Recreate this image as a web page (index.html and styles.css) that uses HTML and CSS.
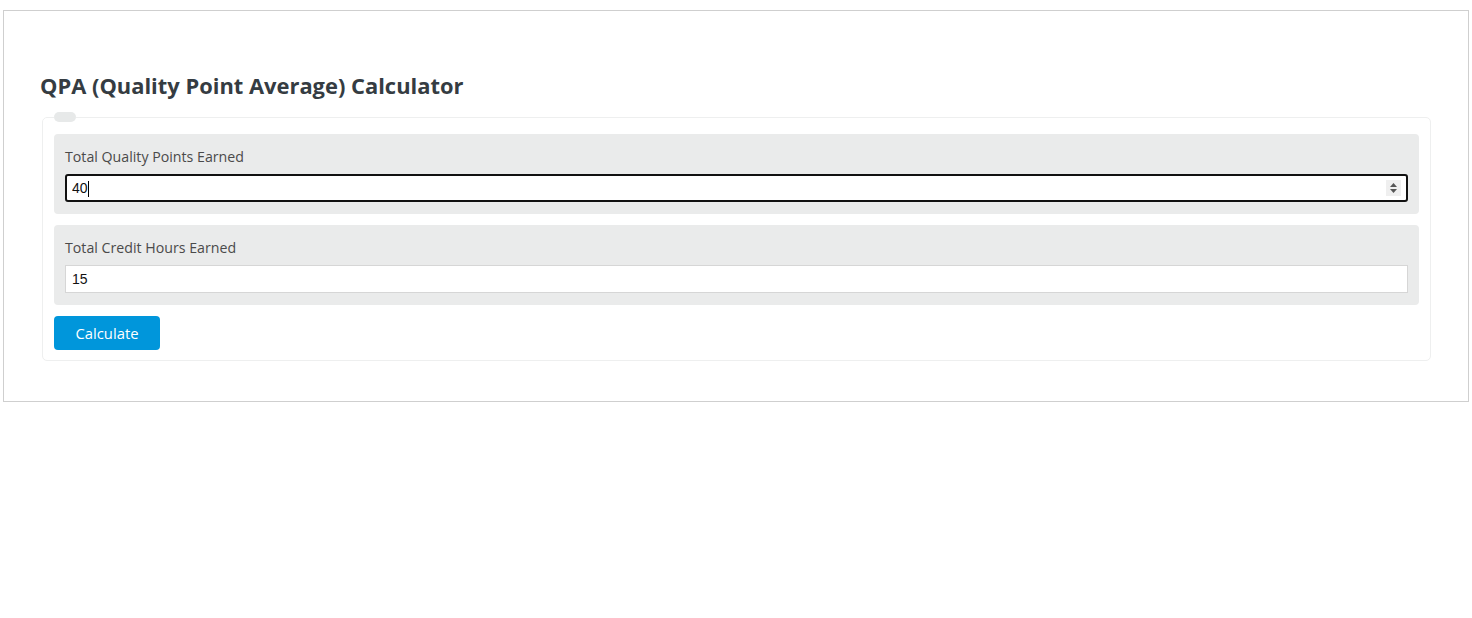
FILE: index.html
```html
<!DOCTYPE html>
<html>
<head>
    <title>QPA Calculator</title>
    <link rel="stylesheet" href="styles.css">
</head>
<body>
    <div class="calc-wrap">
        <h2 class="calc-title">QPA (Quality Point Average) Calculator</h2>
        <form class="calc-form" onsubmit="return false;">
            <fieldset class="calc-fields">
                <legend class="calc-legend"></legend>

                <div class="field">
                    <label class="field-label" for="points">Total Quality Points Earned</label>
                    <div class="number-box focused">
                        <input class="field-input" id="points" type="text" value="40">
                        <span class="caret"></span>
                        <span class="spinner">
                            <svg width="9" height="12" viewBox="0 0 9 12">
                                <path d="M4.5 1 L8 5 L1 5 Z" fill="#555"/>
                                <path d="M4.5 11 L8 7 L1 7 Z" fill="#555"/>
                            </svg>
                        </span>
                    </div>
                </div>

                <div class="field">
                    <label class="field-label" for="hours">Total Credit Hours Earned</label>
                    <div class="number-box">
                        <input class="field-input" id="hours" type="text" value="15">
                    </div>
                </div>

                <button class="calc-btn" type="button">Calculate</button>
            </fieldset>
        </form>
    </div>
</body>
</html>
```

FILE: styles.css
```css
body {
    margin: 0;
    background: #fff;
    font-family: "Open Sans", "Noto Sans", sans-serif;
}

.calc-wrap {
    margin: 10px 3px 0 3px;
    border: 1px solid #cfcfcf;
    padding: 0 37px 40px 38px;
    box-sizing: border-box;
    width: 1466px;
}

.calc-title {
    margin: 0 0 0 -2px;
    padding: 61px 0 12px 0;
    font-size: 21.9px;
    line-height: 28px;
    font-weight: 700;
    color: #353c42;
}

.calc-form {
    margin: 0;
}

.calc-fields {
    margin: 0;
    border: 1px solid #eeefef;
    border-radius: 5px;
    padding: 12px 11px 10px 11px;
    display: flex;
    flex-direction: column;
    align-items: flex-start;
    gap: 11px;
}

.calc-legend {
    width: 22px;
    height: 10px;
    padding: 0;
    margin: 0;
    background: #e7e9e9;
    border-radius: 5px;
}

.field {
    align-self: stretch;
    background: #eaebeb;
    border-radius: 4px;
    padding: 12px 11px;
    display: flex;
    flex-direction: column;
    gap: 8px;
}

.field-label {
    font-size: 14.2px;
    line-height: 21px;
    color: #4a4a4a;
    margin-bottom: -1px;
}

.number-box {
    position: relative;
    height: 28px;
    box-sizing: border-box;
    background: #fff;
    border: 1px solid #d6d6d6;
    display: flex;
    align-items: center;
}

.number-box.focused {
    border: 2px solid #111;
    border-radius: 3px;
}

.field-input {
    flex: 1;
    border: 0;
    outline: 0;
    background: transparent;
    padding: 0 0 0 6px;
    font-family: "Liberation Sans", Arial, sans-serif;
    font-size: 14px;
    color: #111;
    height: 100%;
}

.focused .field-input {
    padding-left: 5px;
}

.caret {
    position: absolute;
    left: 21px;
    top: 5px;
    width: 1px;
    height: 16px;
    background: #000;
}

.spinner {
    width: 15px;
    height: 16px;
    margin-right: 5px;
    background: #efefef;
    display: flex;
    align-items: center;
    justify-content: center;
}

.calc-btn {
    margin: 0;
    width: 106px;
    height: 34px;
    border: 0;
    border-radius: 4px;
    background: #0096db;
    color: #fff;
    font-family: "Open Sans", "Noto Sans", sans-serif;
    font-size: 14.8px;
    padding: 0;
    cursor: pointer;
}
```
